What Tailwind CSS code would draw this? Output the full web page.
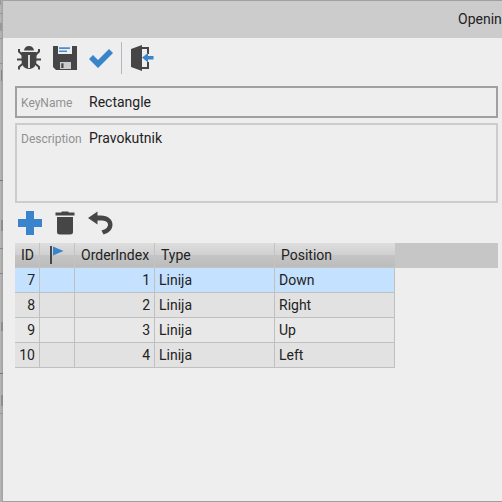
<!DOCTYPE html>
<html lang="en">
<head>
<meta charset="utf-8">
<title>Opening</title>
<script src="https://cdn.jsdelivr.net/npm/@tailwindcss/browser@4"></script>
</head>
<body class="relative h-[502px] w-[502px] overflow-hidden bg-[#a0a0a0] font-[Roboto,sans-serif] text-sm text-[#222]">
  <!-- page behind the dialog -->
  <div class="absolute inset-y-0 left-0 w-[3px] bg-linear-to-r from-[#b8b8b8] to-[#a0a0a0]">
    <i class="absolute left-0 top-0 h-[5px] w-px bg-[#999]"></i>
    <i class="absolute left-0 top-[13px] h-px w-[3px] bg-[#959595]"></i>
    <i class="absolute left-0 top-[23px] h-[8px] w-[2px] bg-[#999]"></i>
    <i class="absolute left-0 top-[38px] h-px w-[3px] bg-[#959595]"></i>
    <i class="absolute left-0 top-[63px] h-px w-[3px] bg-[#959595]"></i>
    <i class="absolute left-px top-[70px] h-[11px] w-px bg-[#858585]"></i>
    <i class="absolute left-0 top-[180px] h-px w-[3px] bg-[#777]"></i>
    <i class="absolute left-px top-[220px] h-[11px] w-[2px] bg-[#8d8d8d]"></i>
    <i class="absolute left-0 top-[248px] h-px w-[3px] bg-[#858585]"></i>
    <i class="absolute left-0 top-[273px] h-px w-[3px] bg-[#858585]"></i>
    <i class="absolute left-px top-[322px] h-[9px] w-[2px] bg-[#8d8d8d]"></i>
    <i class="absolute left-0 top-[373px] h-px w-[3px] bg-[#777]"></i>
    <i class="absolute left-px top-[395px] h-[11px] w-[2px] bg-[#8d8d8d]"></i>
    <i class="absolute left-0 top-[413px] h-px w-[3px] bg-[#959595]"></i>
  </div>

  <main class="relative ml-[3px] mt-px flex h-[500px] w-[499px] flex-col bg-[#eee]">
    <header class="flex h-[37px] shrink-0 items-center overflow-hidden bg-[#ccc] pb-[2px] pl-[455px] whitespace-nowrap">Opening</header>

    <div class="flex h-[43px] shrink-0 items-center pb-[3px] pl-3">
      <svg class="ml-[2px] h-[26px] w-[24px]" viewBox="0 0 24 26" fill="none" stroke="#464646" stroke-width="2">
        <path d="M7 5.500C7.500 2.500 9 1 12 1S16.500 2.500 17 5.500Z" fill="#464646" stroke="none"/>
        <path d="M4.500 7H19.500V15C19.500 20 17 24 12 24S4.500 20 4.500 15Z" fill="#464646" stroke="none"/>
        <path d="M5.500 10L2 6.500V4M18.500 10L22 6.500V4M5 14.500H0M19 14.500H24M6 18.500L2 22V24.500M18 18.500L22 22V24.500"/>
        <path d="M12 10V23" stroke="#eee" stroke-width="1.800"/>
      </svg>
      <svg class="ml-[12px] h-[24px] w-[24px]" viewBox="0 0 24 24">
        <path d="M0 0H24V24H3L0 21Z" fill="#464646"/>
        <path d="M5 0H19V8H5Z" fill="#eee"/>
        <path d="M6 1.200H17V3H6ZM6 4.500H14V6H6Z" fill="#4a8fd3"/>
        <path d="M7 16H18V23H7Z" fill="#ccc"/>
        <path d="M8.300 17.300H10.500V22H8.300Z" fill="#464646"/>
      </svg>
      <svg class="ml-[11px] h-[20px] w-[26px]" viewBox="0 0 26 20"><path d="M1 11L5 7L10 12L21 1L25 5L10 20Z" fill="#3a84cb"/></svg>
      <div class="ml-[7px] h-8 w-px bg-[#b4b6bd]"></div>
      <svg class="ml-[9px] h-[26px] w-[23px]" viewBox="0 0 23 26">
        <path d="M0 4L11 0V26L0 22Z" fill="#464646"/>
        <path d="M11 3H17V9M17 17V23H11" fill="none" stroke="#464646" stroke-width="2"/>
        <path d="M11 12.500L17 8V11H22.500V14.500H17V17.500Z" fill="#3a84cb"/>
      </svg>
    </div>

    <div class="ml-3 mt-[5px] flex h-8 w-[483px] shrink-0 items-center border-2 border-[#a0a0a0] pl-1">
      <span class="w-[68px] pt-[2px] text-xs text-[#919191]">KeyName</span><span>Rectangle</span>
    </div>
    <div class="ml-3 mt-[5px] flex h-20 w-[483px] shrink-0 items-start border-2 border-[#ccc] pl-1 pt-[3px]">
      <span class="w-[68px] pt-px text-xs leading-5 text-[#919191]">Description</span><span class="leading-5">Pravokutnik</span>
    </div>

    <div class="flex h-10 shrink-0 items-center pl-[15px]">
      <svg class="h-6 w-6" viewBox="0 0 24 24"><path d="M8 0H16V8H24V16H16V24H8V16H0V8H8Z" fill="#3a84cb"/></svg>
      <svg class="ml-[13px] h-6 w-5" viewBox="0 0 20 24"><path d="M0.500 1.500H6L7 0.500H13L14 1.500H19.500V4.500H0.500ZM2 6H18V21Q18 23.500 15 23.500H5Q2 23.500 2 21Z" fill="#464646"/></svg>
      <svg class="ml-[13px] h-6 w-[25px]" viewBox="0 0 25 24"><path d="M0 7L9.500 0.500V4.500H13C20 4.500 24.500 8.500 24.500 13.500C24.500 18.500 21 22 15.500 23.500L13.500 19.500C17.500 18.500 20 16.500 20 13.500C20 10.800 17 9.500 13 9.500H9.500V13.500Z" fill="#464646"/></svg>
    </div>

    <div class="ml-3 w-[483px] bg-[#c6c6c6]">
      <div class="grid h-[25px] w-[380px] grid-cols-[25px_35px_80px_120px_120px] border-b border-[#c3c3c3] bg-[linear-gradient(#dedede_0%,#d0d0d0_49%,#c5c5c5_50%,#bcbcbc_100%)] leading-6">
        <div class="border-r border-[#c3c3c3] pr-[5px] text-right">ID</div>
        <div class="border-r border-[#c3c3c3] pl-[10px] pt-[3px]"><svg class="h-[18px] w-[14px]" viewBox="0 0 14 18"><path d="M0 0H2V18H0Z" fill="#464646"/><path d="M3 0.500L13.500 5L3 9.500Z" fill="#3a84cb"/></svg></div>
        <div class="border-r border-[#c3c3c3] pl-[6px]">OrderIndex</div>
        <div class="border-r border-[#c3c3c3] pl-[6px]">Type</div>
        <div class="pl-[6px]">Position</div>
      </div>
    </div>
    <div class="ml-3 w-[380px] leading-6 *:grid *:h-[25px] *:grid-cols-[25px_35px_80px_120px_120px] *:border-b *:border-[#c0c0c0] *:*:border-r *:*:border-[#c0c0c0] *:*:px-1">
      <div class="bg-[#c4e1ff]"><div class="text-right">7</div><div></div><div class="text-right">1</div><div>Linija</div><div>Down</div></div>
      <div class="bg-[#e2e2e2]"><div class="text-right">8</div><div></div><div class="text-right">2</div><div>Linija</div><div>Right</div></div>
      <div class="bg-[#e8e8e8]"><div class="text-right">9</div><div></div><div class="text-right">3</div><div>Linija</div><div>Up</div></div>
      <div class="bg-[#e2e2e2]"><div class="text-right">10</div><div></div><div class="text-right">4</div><div>Linija</div><div>Left</div></div>
    </div>
  </main>
</body>
</html>
